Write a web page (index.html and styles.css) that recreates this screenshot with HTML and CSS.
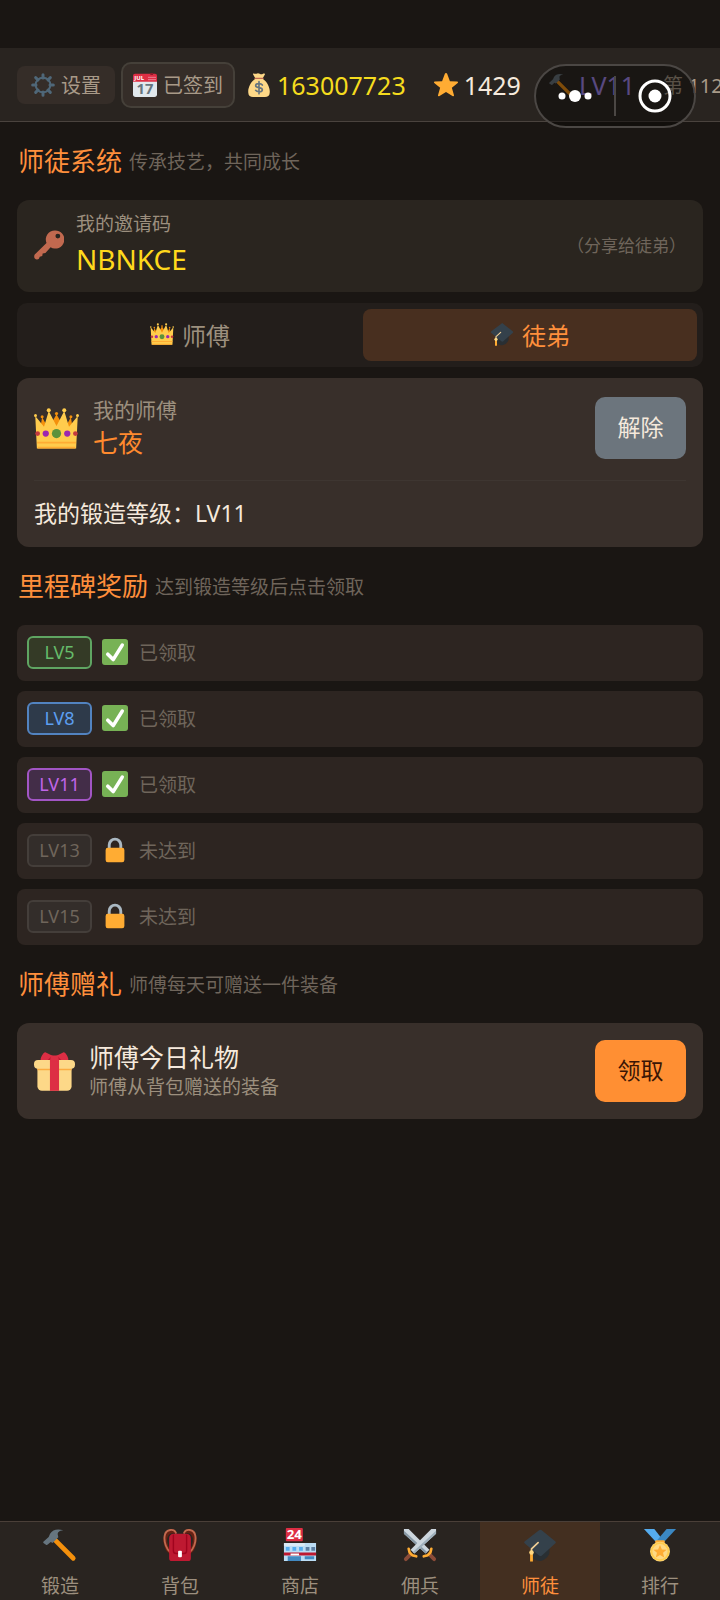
FILE: index.html
```html
<!DOCTYPE html>
<html lang="zh-CN">
<head>
  <title>师徒系统</title>
  <meta charset="utf-8">
  <meta name="viewport" content="width=device-width, initial-scale=1">
  <link rel="stylesheet" href="styles.css">
</head>
<body>
  <!-- icon sprite -->
  <svg class="sprite" aria-hidden="true">
    <symbol id="i-gear" viewBox="0 0 36 36">
      <g stroke="#4f6778" stroke-width="4.500" stroke-linecap="round">
        <path d="M18 2.500v5M18 28.500v5M2.500 18h5M28.500 18h5M7 7l3.500 3.500M25.500 25.500L29 29M29 7l-3.500 3.500M10.500 25.500L7 29"/>
      </g>
      <circle cx="18" cy="18" r="11" fill="none" stroke="#4f6778" stroke-width="3"/>
    </symbol>
    <symbol id="i-money" viewBox="0 0 36 36">
      <path fill="#fdd888" d="M12 9C5 14 1 23 2 30c0 4 3 6 7 6h18c4 0 7-2 7-6 1-7-3-16-10-21z"/>
      <path fill="#fdd888" d="M9 1c2-1 3 1 5 0s3-1 5 0 3 1 5 0 3 0 3 1l-4 7H13L9 2z"/>
      <path fill="none" stroke="#bf6952" stroke-width="2" stroke-linecap="round" d="M12 8h12"/>
      <path fill="none" stroke="#67757f" stroke-width="2.500" stroke-linecap="round" d="M23 18c-2-3-10-3-10 1s10 2 10 6-8 4-10 1M18 13v18"/>
    </symbol>
    <symbol id="i-star" viewBox="0 0 36 36">
      <path fill="#ffac33" d="M18 0c.8 0 1.400.5 1.700 1.200l4.200 11.300 11 .4c1.100 0 1.500 1.400.7 2.100l-8.800 7.200 3.200 11.300c.3 1.100-.8 1.900-1.700 1.300L18 28.500l-10.300 6.300c-.9.600-2-.2-1.700-1.300l3.200-11.300L.4 15c-.8-.7-.4-2.100.7-2.100l11-.4 4.200-11.300C16.600.5 17.200 0 18 0z"/>
    </symbol>
    <symbol id="i-hammer" viewBox="0 0 36 36">
      <path stroke="#f4900c" stroke-width="5" stroke-linecap="round" d="M11 11l21 21"/>
      <path fill="#66757f" d="M.4 14.600L6 9.500 7.500 6C10 2 15 .4 21.500 2.400c-4.500.3-6.700 2.600-5.700 5.200l.4 2.200-6 6-2-1-3.200 2.800c-.8.600-1.500.4-2.200-.2L.5 15.800c-.4-.4-.5-.8-.1-1.200z"/>
    </symbol>
    <symbol id="i-key" viewBox="0 0 36 36">
      <path fill="#c1694f" fill-rule="evenodd" d="M25 .5a10.800 10.800 0 0 0-10 15L.9 29.500C0 30.500 0 33 1 34.300c1.300 1.500 3.800 1.400 4.900.2l1-2.500 3-.7.500-3.200 3.300-.6 6.200-6.800A10.900 10.900 0 1 0 25 .5zm3.600 3.900a2.900 2.900 0 1 1 0 5.800 2.900 2.900 0 0 1 0-5.800z"/>
    </symbol>
    <symbol id="i-crown" viewBox="0 0 36 36">
      <path fill="#f4900c" d="M3 30L6.500 9l5 9L18 6.500 24.500 18l5-9L33 30z"/>
      <g fill="#f4900c"><circle cx="6.500" cy="8.500" r="1.200"/><circle cx="18" cy="6" r="1.300"/><circle cx="29.500" cy="8.500" r="1.200"/></g>
      <path fill="#ffcc4d" d="M2.300 34L1 8l7 8.500L11.800 4 18 16 24.200 4 28 16.500 35 8l-1.300 26z"/>
      <g fill="#ffcc4d"><circle cx="1.200" cy="7.500" r="1.200"/><circle cx="11.800" cy="3.400" r="1.600"/><circle cx="24.200" cy="3.400" r="1.600"/><circle cx="34.800" cy="7.500" r="1.200"/></g>
      <path fill="#ffac33" d="M2.500 28.500h31V30h-31zM3 32.500h30V34H3z"/>
      <circle cx="18" cy="22" r="3.700" fill="#5c913b"/>
      <g fill="#9c26b0"><circle cx="9.400" cy="22" r="2.500"/><circle cx="26.600" cy="22" r="2.500"/></g>
      <g fill="#c43a3f"><circle cx="2.900" cy="22" r="1.900"/><circle cx="33.100" cy="22" r="1.900"/></g>
    </symbol>
    <symbol id="i-cap" viewBox="0 0 36 36">
      <path fill="#292f33" d="M8 18l10 5 10-5v8c0 3-5 9-10 9s-10-4-10-9z"/>
      <path fill="#34414b" d="M17 2.500c1-.9 1.800-.9 2.800 0L34 14c1 .8 1 1.600 0 2.400L20 29c-1 .8-2 .8-3 0L2 16.500c-1-.9-1-1.700 0-2.500z"/>
      <path fill="none" stroke="#f0cf96" stroke-width="1.800" stroke-linecap="round" d="M16 15.500l-7 6.500v4"/>
      <path fill="#ffac33" d="M7.500 27h3v8.500h-3z"/>
      <circle cx="9" cy="26" r="2.400" fill="#ffd983"/>
    </symbol>
    <symbol id="i-check" viewBox="0 0 36 36">
      <rect width="36" height="36" rx="4" fill="#77b255"/>
      <path fill="none" stroke="#fff" stroke-width="5" stroke-linecap="round" stroke-linejoin="round" d="M8 21l7.500 7.500L28 8.500"/>
    </symbol>
    <symbol id="i-lock" viewBox="0 0 36 36">
      <path fill="none" stroke="#aab8c2" stroke-width="4" d="M10 17v-6a8 8 0 0 1 16 0v6"/>
      <rect x="5" y="15" width="26" height="20" rx="3" fill="#ffac33"/>
    </symbol>
    <symbol id="i-gift" viewBox="0 0 36 36">
      <path fill="#fdd888" d="M3 14h30v17a4 4 0 0 1-4 4H7a4 4 0 0 1-4-4z"/>
      <path fill="#fcab40" d="M3 15h30v1.800H3z"/>
      <rect y="8" width="36" height="7.500" rx="3.500" fill="#fdd888"/>
      <path fill="#dd2e44" d="M14 6h8v29h-8z"/>
      <path fill="#dd2e44" d="M18 8H6c-1-1 2-7 4-7l8 4 8-4c2 0 5 6 4 7z"/>
      <path fill="#be1931" d="M12 8l3-3h6l3 3z"/>
      <path fill="#dd2e44" d="M15 4h6l1 5h-8z"/>
    </symbol>
    <symbol id="i-bag" viewBox="0 0 36 36">
      <path fill="none" stroke="#662113" stroke-width="4" d="M13 4C4 2 1 10 3 17c1 5 3 8 6 9M23 4c9-2 12 6 10 13-1 5-3 8-6 9"/>
      <path fill="none" stroke="#c1694f" stroke-width="2" d="M14 6C12 0 3 1 1.800 8S4 23 8 26M22 6c2-6 11-5 12.200 2S32 23 28 26"/>
      <path fill="#be1931" d="M6.500 11c0-3 2-5 5-5h13c3 0 5 2 5 5v21a3 3 0 0 1-3 3h-17a3 3 0 0 1-3-3z"/>
      <path fill="none" stroke="#a0041e" stroke-width="1.500" d="M11 7v17c0 2 1 3 3 3h8c2 0 3-1 3-3V7"/>
      <rect x="16" y="24" width="4" height="7" rx="1" fill="#fff"/>
    </symbol>
    <symbol id="i-swords" viewBox="0 0 36 36">
      <path fill="#ccd6dd" d="M1 1h5l22 22-4 4L1 6z"/>
      <path fill="#8899a6" d="M1 3l24.500 22.500L24 27 1 6z"/>
      <path fill="#ccd6dd" d="M35 1h-5L8 23l4 4L35 6z"/>
      <path fill="#9fb0bc" d="M35 3L10.500 25.500 12 27 35 6z"/>
      <path stroke="#8a4b38" stroke-width="4" stroke-linecap="round" d="M8 28l-5 5M28 28l5 5"/>
      <path fill="none" stroke="#ffac33" stroke-width="2.800" stroke-linecap="round" d="M6 22l1 4 3 3 4 1M30 22l-1 4-3 3-4 1"/>
    </symbol>
    <symbol id="i-medal" viewBox="0 0 36 36">
      <path fill="#55acee" d="M1 1h11l10 13h-9z"/>
      <path fill="#3b88c3" d="M35 1H25L14 14h9z"/>
      <rect x="13" y="13" width="10" height="5" rx="1" fill="#ffac33"/>
      <circle cx="18" cy="25" r="10.500" fill="#ffd983"/>
      <circle cx="18" cy="25" r="9" fill="none" stroke="#ffcc4d" stroke-width="2"/>
      <path fill="#ffac33" d="M18 18l2 4.700 5 .4-3.800 3.200 1.200 4.900-4.400-2.700-4.400 2.700 1.200-4.900L11 23.100l5-.4z"/>
    </symbol>
  </svg>

  <div id="app">
    <header class="topbar">
      <div class="stats">
        <button type="button" class="chip"><svg class="icon-s"><use href="#i-gear"/></svg>设置</button>
        <button type="button" class="chip signed">
          <svg class="icon-s" viewBox="0 0 36 36">
            <path fill="#e1e8ed" d="M0 10h36v22a4 4 0 0 1-4 4H4a4 4 0 0 1-4-4z"/>
            <path fill="#dd2e44" d="M36 13V4a3 3 0 0 0-3-3H3a3 3 0 0 0-3 3v9z"/>
            <path fill="#8d1a2a" d="M26 0h4v3h-4z"/>
            <path stroke="#f4abba" stroke-width="1.500" stroke-dasharray="2 1" d="M23 6.500h11M23 10h11"/>
            <text x="2" y="11" class="cal-month">JUL</text>
            <text x="18" y="32" text-anchor="middle" class="cal-day">17</text>
          </svg>已签到</button>
        <span class="stat gold"><svg class="icon-s"><use href="#i-money"/></svg>163007723</span>
        <span class="stat"><svg class="icon-s"><use href="#i-star"/></svg>1429</span>
        <span class="stat level"><svg class="icon-s"><use href="#i-hammer"/></svg>LV11</span>
        <span class="rank">第 1129 名</span>
      </div>
      <div class="capsule">
        <button type="button" aria-label="更多">
          <svg width="34" height="34" viewBox="0 0 34 34" fill="#fff"><circle cx="4" cy="17" r="3.500"/><circle cx="17" cy="17" r="6"/><circle cx="30" cy="17" r="3.500"/></svg>
        </button>
        <button type="button" aria-label="关闭">
          <svg width="34" height="34" viewBox="0 0 34 34"><circle cx="17" cy="17" r="15" fill="none" stroke="#fff" stroke-width="3"/><circle cx="17" cy="17" r="6.500" fill="#fff"/></svg>
        </button>
      </div>
    </header>

    <main>
      <div class="title"><h2>师徒系统</h2><span>传承技艺，共同成长</span></div>

      <section class="card invite">
        <svg class="icon-key"><use href="#i-key"/></svg>
        <div class="info">
          <p class="label">我的邀请码</p>
          <p class="code">NBNKCE</p>
        </div>
        <span class="note">（分享给徒弟）</span>
      </section>

      <div class="tabs">
        <button type="button"><svg class="icon-s"><use href="#i-crown"/></svg>师傅</button>
        <button type="button" class="active"><svg class="icon-s"><use href="#i-cap"/></svg>徒弟</button>
      </div>

      <section class="card master">
        <div class="master-top">
          <svg class="icon-crown"><use href="#i-crown"/></svg>
          <div class="info">
            <p class="label">我的师傅</p>
            <p class="name">七夜</p>
          </div>
          <button type="button" class="btn gray">解除</button>
        </div>
        <p class="forge">我的锻造等级：LV11</p>
      </section>

      <div class="title"><h2>里程碑奖励</h2><span>达到锻造等级后点击领取</span></div>

      <ul class="milestones">
        <li><span class="badge green">LV5</span><svg class="icon-m"><use href="#i-check"/></svg>已领取</li>
        <li><span class="badge blue">LV8</span><svg class="icon-m"><use href="#i-check"/></svg>已领取</li>
        <li><span class="badge purple">LV11</span><svg class="icon-m"><use href="#i-check"/></svg>已领取</li>
        <li><span class="badge">LV13</span><svg class="icon-m"><use href="#i-lock"/></svg>未达到</li>
        <li><span class="badge">LV15</span><svg class="icon-m"><use href="#i-lock"/></svg>未达到</li>
      </ul>

      <div class="title"><h2>师傅赠礼</h2><span>师傅每天可赠送一件装备</span></div>

      <section class="card gift">
        <svg class="icon-gift"><use href="#i-gift"/></svg>
        <div class="info">
          <p class="gift-name">师傅今日礼物</p>
          <p class="label">师傅从背包赠送的装备</p>
        </div>
        <button type="button" class="btn orange">领取</button>
      </section>
    </main>

    <nav class="tabbar">
      <a href="#forge"><svg><use href="#i-hammer"/></svg>锻造</a>
      <a href="#bag"><svg><use href="#i-bag"/></svg>背包</a>
      <a href="#shop">
        <svg viewBox="0 0 36 36">
          <path fill="#bbddf5" d="M1 16h34v19H1z"/>
          <path fill="#dbeaf5" d="M1 16h22v3H1z"/>
          <path fill="#55acee" d="M3 20h4v4H3zM10 20h4v4h-4zM17 20h4v4h-4z"/>
          <path fill="#5c7fa3" d="M24 20h4v4h-4zM30 20h4v4h-4z"/>
          <path fill="#be1931" d="M1 26h34v3H1z"/>
          <path fill="#fff" d="M8 27h9v2H8z"/>
          <path fill="#4289c1" d="M5 30h14v5H5zM23 30h10v3H23z"/>
          <rect x="3" y="0" width="18" height="14" rx="1" fill="#dd2e44"/>
          <text x="12" y="12" text-anchor="middle" class="store-sign">24</text>
        </svg>商店</a>
      <a href="#merc"><svg><use href="#i-swords"/></svg>佣兵</a>
      <a href="#mentor" class="active"><svg><use href="#i-cap"/></svg>师徒</a>
      <a href="#rank"><svg><use href="#i-medal"/></svg>排行</a>
    </nav>
  </div>
</body>
</html>
```

FILE: styles.css
```css
* {
  box-sizing: border-box;
}
body {
  margin: 0;
  background-color: #1a1613;
  color: #f5e9dc;
  font-family: "Noto Sans", "Noto Sans CJK SC", sans-serif;
  font-size: 19px;
}
h2, p, ul {
  margin: 0;
  padding: 0;
  font-weight: normal;
}
button {
  border: 0;
  padding: 0;
  background: none;
  color: inherit;
  font: inherit;
  cursor: pointer;
}
svg {
  flex: none;
  display: block;
}
.sprite {
  position: absolute;
  width: 0;
  height: 0;
}
#app {
  min-height: 100vh;
  display: flex;
  flex-direction: column;
  padding-top: 48px;  /* phone status bar */
}

/* text inside the icons */
.cal-month {
  font-size: 9px;
  font-weight: bold;
  fill: #fff;
}
.cal-day {
  font-size: 22px;
  font-weight: bold;
  fill: #66757f;
}
.store-sign {
  font-size: 14px;
  font-weight: bold;
  fill: #fff;
}

.icon-s {
  width: 24px;
  height: 24px;
}
.icon-m {
  width: 26px;
  height: 26px;
}
.icon-key {
  width: 30px;
  height: 30px;
}
.icon-crown {
  width: 45px;
  height: 45px;
}
.icon-gift {
  width: 41px;
  height: 41px;
}

/* top bar */
.topbar {
  position: relative;
  background-color: #292420;
  border-bottom: 1px solid #4a433e;
}
.stats {
  display: flex;
  align-items: center;
  height: 73px;
  padding-left: 17px;
  overflow: hidden;
  white-space: nowrap;
}
.chip {
  flex: none;
  display: flex;
  align-items: center;
  gap: 6px;
  height: 38px;
  padding: 0 14px;
  margin-right: 6px;
  border-radius: 8px;
  background-color: #352d28;
  color: #a89a88;
  font-size: 20px;
}
.chip.signed {
  height: 46px;
  padding: 0 10px;
  margin-right: 12px;
  border: 2px solid #454039;
  border-radius: 10px;
}
.stat {
  flex: none;
  display: flex;
  align-items: center;
  gap: 6px;
  margin-right: 28px;
  font-size: 25px;
  line-height: 34px;
}
.stat.gold {
  color: #f5dc1e;
}
.stat.level {
  color: #a78bfa;
}
.rank {
  flex: none;
  color: #a89a88;
  font-size: 20px;
}
.capsule {
  position: absolute;
  top: 16px;
  right: 24px;
  display: flex;
  width: 162px;
  height: 64px;
  padding: 10px 0;
  border: 2px solid #4b4744;
  border-radius: 32px;
  background-color: rgba(10, 8, 6, 0.5);
}
.capsule button {
  flex: 1;
  display: flex;
  align-items: center;
  justify-content: center;
}
.capsule button + button {
  border-left: 2px solid #4b4744;
}

main {
  flex: 1;
  padding: 0 17px 20px;
}
.title {
  display: flex;
  align-items: center;
  gap: 7px;
  height: 38px;
  margin: 20px 0;
  padding-left: 1px;
}
.title h2 {
  padding-bottom: 3px;
  color: #ff8f3c;
  font-size: 26px;
}
.title span {
  color: #6f655b;
}
.card {
  border-radius: 12px;
  background-color: #382f2a;
}
.info {
  flex: 1;
}
.label {
  color: #9c8f7e;
}

/* invite code */
.invite {
  display: flex;
  align-items: center;
  gap: 12px;
  padding: 10px 17px 12px;
  background-color: #2a251f;
}
.invite .label {
  line-height: 28px;
}
.code {
  color: #ffd91c;
  font-size: 28px;
  line-height: 42px;
}
.note {
  padding-bottom: 2px;
  color: #6f655b;
  font-size: 17px;
}

/* master / apprentice tabs */
.tabs {
  display: flex;
  gap: 6px;
  margin: 11px 0;
  padding: 6px;
  border-radius: 10px;
  background-color: #231e1b;
}
.tabs button {
  flex: 1;
  display: flex;
  align-items: center;
  justify-content: center;
  gap: 8px;
  height: 52px;
  padding-bottom: 2px;
  border-radius: 8px;
  color: #9c8f7e;
  font-size: 24px;
}
.tabs .active {
  background-color: #482f1f;
  color: #ff8f3c;
}

/* my master */
.master {
  padding: 16px 17px 18px;
}
.master-top {
  display: flex;
  align-items: center;
  gap: 14px;
  min-height: 68px;
}
.master .info {
  align-self: flex-start;
  line-height: 32px;
}
.master .label {
  font-size: 21px;
}
.name {
  color: #ff8a2e;
  font-size: 25px;
}
.forge {
  margin-top: 18px;
  padding-top: 16px;
  border-top: 1px solid #3e3631;
  font-size: 23px;
  line-height: 32px;
}
.btn {
  width: 91px;
  height: 62px;
  padding-bottom: 4px;
  border-radius: 10px;
  font-size: 23px;
}
.gray {
  background-color: #6c757d;
}
.orange {
  background-color: #ff8f33;
  color: #3a1505;
}

/* milestones */
.milestones {
  display: flex;
  flex-direction: column;
  gap: 10px;
  list-style: none;
}
.milestones li {
  display: flex;
  align-items: center;
  height: 56px;
  padding: 0 10px 2px;
  border-radius: 8px;
  background-color: #2d2521;
  color: #6f655b;
}
.milestones svg {
  margin: 0 11px 0 10px;
}
.badge {
  width: 65px;
  height: 33px;
  border: 2px solid #443e3a;
  border-radius: 6px;
  background-color: #332d2a;
  font-size: 18px;
  line-height: 29px;
  text-align: center;
}
.badge.green {
  border-color: #5fa562;
  background-color: #343a26;
  color: #66bb6a;
}
.badge.blue {
  border-color: #5283c0;
  background-color: #2e3a4a;
  color: #5c9ef0;
}
.badge.purple {
  border-color: #a255c4;
  background-color: #432d48;
  color: #c065e8;
}

/* gift */
.gift {
  display: flex;
  align-items: center;
  gap: 14px;
  padding: 17px;
}
.gift-name {
  font-size: 25px;
  line-height: 32px;
}
.gift .label {
  line-height: 28px;
}

/* bottom navigation */
.tabbar {
  position: sticky;
  bottom: 0;
  display: flex;
  border-top: 1px solid #4a3f38;
  background-color: #292420;
}
.tabbar a {
  flex: 1;
  display: flex;
  flex-direction: column;
  align-items: center;
  gap: 11px;
  padding: 6px 0 1px;
  color: #9c8f7e;
  line-height: 26px;
  text-decoration: none;
}
.tabbar svg {
  width: 34px;
  height: 34px;
}
.tabbar .active {
  background-color: #432f20;
  color: #ff8f3c;
}
```
